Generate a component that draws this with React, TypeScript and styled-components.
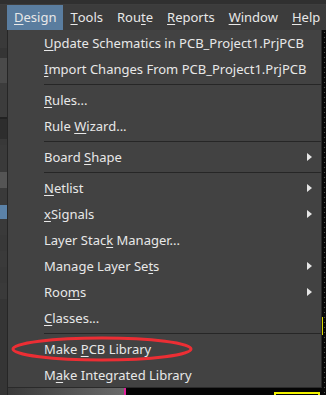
import React from "react"
import styled, { createGlobalStyle } from "styled-components"

const GlobalStyle = createGlobalStyle`
  html, body {
    margin: 0;
    padding: 0;
    background: #2c2c2c;
    width: 326px;
    height: 395px;
    overflow: hidden;
  }
  body {
    font-family: "Noto Sans", "Liberation Sans", sans-serif;
  }
`

type Entry =
  | { kind: "item"; label: string; key: number; sub?: boolean }
  | { kind: "sep" }

const menuTabs: { label: string; key: number }[] = [
  { label: "Design", key: 0 },
  { label: "Tools", key: 0 },
  { label: "Route", key: 3 },
  { label: "Reports", key: 0 },
  { label: "Window", key: 0 },
  { label: "Help", key: 0 },
]

const entries: Entry[] = [
  { kind: "item", label: "Update Schematics in PCB_Project1.PrjPCB", key: 0 },
  { kind: "item", label: "Import Changes From PCB_Project1.PrjPCB", key: 0 },
  { kind: "sep" },
  { kind: "item", label: "Rules...", key: 0 },
  { kind: "item", label: "Rule Wizard...", key: 5 },
  { kind: "sep" },
  { kind: "item", label: "Board Shape", key: 6, sub: true },
  { kind: "sep" },
  { kind: "item", label: "Netlist", key: 0, sub: true },
  { kind: "item", label: "xSignals", key: 0, sub: true },
  { kind: "item", label: "Layer Stack Manager...", key: 10 },
  { kind: "item", label: "Manage Layer Sets", key: 15, sub: true },
  { kind: "item", label: "Rooms", key: 3, sub: true },
  { kind: "item", label: "Classes...", key: 0 },
  { kind: "sep" },
  { kind: "item", label: "Make PCB Library", key: 5 },
  { kind: "item", label: "Make Integrated Library", key: 1 },
]

const leftBlocks: { h: number; c: string }[] = [
  { h: 18, c: "#3a3a3a" },
  { h: 10, c: "#353535" },
  { h: 25, c: "#4a4a4a" },
  { h: 34, c: "#3c3c3c" },
  { h: 2, c: "#222" },
  { h: 20, c: "#2d2d2d" },
  { h: 6, c: "#383838" },
  { h: 27, c: "#3a3a3a" },
  { h: 16, c: "#555555" },
  { h: 17, c: "#3a3a3a" },
  { h: 14, c: "#5b82a8" },
  { h: 16, c: "#3a3a3a" },
  { h: 16, c: "#383838" },
  { h: 16, c: "#3a3a3a" },
  { h: 16, c: "#383838" },
  { h: 16, c: "#3a3a3a" },
  { h: 96, c: "#353535" },
]

const Key: React.FC<{ label: string; at: number }> = ({ label, at }) => (
  <>
    {label.slice(0, at)}
    <Mnemonic>{label[at]}</Mnemonic>
    {label.slice(at + 1)}
  </>
)

const App: React.FC = () => {
  return (
    <Page>
      <GlobalStyle />
      <TopEdge />
      <MenuBar>
        {menuTabs.map((t, i) => (
          <Tab key={t.label} active={i === 0}>
            <Key label={t.label} at={t.key} />
          </Tab>
        ))}
      </MenuBar>
      <Workspace>
        <LeftPanel>
          {leftBlocks.map((b, i) => (
            <LeftBlock key={i} style={{ height: b.h, background: b.c }} />
          ))}
        </LeftPanel>
        <MiddleColumn>
          <Dropdown>
            {entries.map((e, i) =>
              e.kind === "sep" ? (
                <Separator key={i} />
              ) : (
                <Item key={i}>
                  <ItemLabel>
                    <Key label={e.label} at={e.key} />
                  </ItemLabel>
                  {e.sub && <Arrow />}
                </Item>
              )
            )}
            <Highlight viewBox="0 0 184 26">
              <ellipse
                cx="92"
                cy="13"
                rx="89"
                ry="11"
                fill="none"
                stroke="#ec2e34"
                strokeWidth="3"
              />
            </Highlight>
          </Dropdown>
          <UnderStrip>
            <GreyPart />
            <MagentaTick />
            <DarkPart>
              <YellowBox />
            </DarkPart>
          </UnderStrip>
        </MiddleColumn>
        <Canvas>
          <YellowTick />
        </Canvas>
      </Workspace>
    </Page>
  )
}

export default App

const Page = styled.div`
  width: 326px;
  height: 395px;
  display: flex;
  flex-direction: column;
  background: #2c2c2c;
  color: #e8e8e8;
  font-size: 13px;
`

const TopEdge = styled.div`
  height: 5px;
  background: #303030;
  border-bottom: 1px solid #3e3e3e;
  box-sizing: border-box;
`

const MenuBar = styled.div`
  height: 25px;
  display: flex;
  align-items: stretch;
  background: #3c3c3c;
  padding-left: 7px;
`

interface TabProps {
  readonly active?: boolean
}
const Tab = styled.div<TabProps>`
  display: flex;
  align-items: center;
  padding: 0 7px 2px;
  color: #e8e8e8;
  white-space: nowrap;
  background: ${props => (props.active ? "#5a7d9f" : "transparent")};
`

const Mnemonic = styled.span`
  text-decoration: underline;
  text-underline-offset: 2px;
  text-decoration-thickness: 1px;
`

const Workspace = styled.div`
  flex: 1;
  display: flex;
  min-height: 0;
`

const LeftPanel = styled.div`
  width: 7px;
  display: flex;
  flex-direction: column;
  overflow: hidden;
  border-right: 1px solid #262626;
`

const LeftBlock = styled.div`
  flex-shrink: 0;
`

const MiddleColumn = styled.div`
  width: 314px;
  display: flex;
  flex-direction: column;
`

const Dropdown = styled.div`
  position: relative;
  height: 358px;
  box-sizing: border-box;
  background: #424242;
  border-right: 1px solid #262626;
  border-bottom: 1px solid #2a2a2a;
  display: flex;
  flex-direction: column;
`

const Item = styled.div`
  height: 26px;
  flex-shrink: 0;
  display: flex;
  align-items: center;
  padding-left: 36px;
  padding-right: 9px;
`

const ItemLabel = styled.span`
  flex: 1;
  white-space: nowrap;
  color: #e8e8e8;
`

const Arrow = styled.span`
  width: 0;
  height: 0;
  border-top: 4px solid transparent;
  border-bottom: 4px solid transparent;
  border-left: 5px solid #e6e6e6;
`

const Separator = styled.div`
  height: 5px;
  flex-shrink: 0;
  margin-left: 36px;
  display: flex;
  align-items: center;
  &::after {
    content: "";
    flex: 1;
    height: 1px;
    background: #262626;
  }
`

const Highlight = styled.svg`
  position: absolute;
  left: 2px;
  top: 306px;
  width: 184px;
  height: 26px;
  overflow: visible;
  pointer-events: none;
`

const UnderStrip = styled.div`
  flex: 1;
  display: flex;
`

const GreyPart = styled.div`
  width: 116px;
  background: linear-gradient(90deg, #3a3a3a, #6a6a6a);
`

const MagentaTick = styled.div`
  width: 2px;
  background: #e0209a;
`

const DarkPart = styled.div`
  flex: 1;
  background: #050505;
  display: flex;
  align-items: flex-end;
  justify-content: flex-end;
  padding-right: 2px;
`

const YellowBox = styled.div`
  width: 46px;
  height: 3px;
  border: 2px solid #f2f200;
  border-bottom: none;
  box-sizing: border-box;
`

const Canvas = styled.div`
  flex: 1;
  background-color: #080808;
  background-image: radial-gradient(#5a5a5a 0.6px, transparent 0.8px);
  background-size: 5px 5px;
  display: flex;
  flex-direction: column;
  justify-content: flex-end;
  padding-bottom: 60px;
`

const YellowTick = styled.div`
  width: 1px;
  height: 18px;
  background: #d8d800;
`
